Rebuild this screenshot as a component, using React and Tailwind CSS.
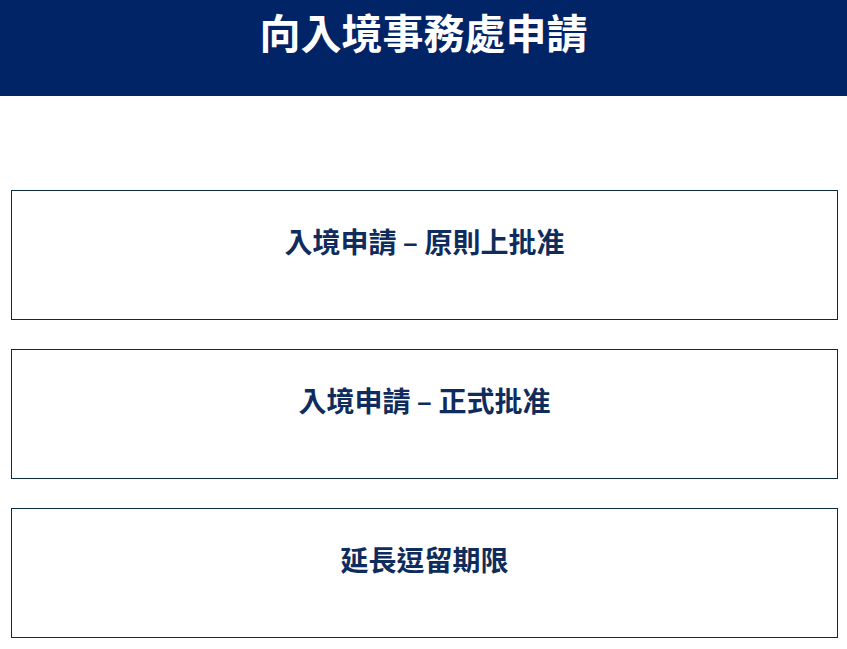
const items = ["入境申請 – 原則上批准", "入境申請 – 正式批准", "延長逗留期限"];

export default function App() {
  return (
    <div className="min-h-[649px] bg-white font-['Noto_Sans_CJK_TC','Noto_Sans',sans-serif]">
      <header className="h-[96px] bg-[#012467] text-center">
        <h1 className="pt-[6px] text-[41px] leading-[50px] font-bold text-white">向入境事務處申請</h1>
      </header>

      <main className="ml-[11px] mt-[94px] flex w-[827px] flex-col gap-[29px]">
        {items.map((label) => (
          <div key={label} className="h-[130px] border border-[#0b2a45] pt-[29px] text-center">
            <span className="text-[28px] leading-[42px] font-bold text-[#0f2c5c]">{label}</span>
          </div>
        ))}
      </main>
    </div>
  );
}
